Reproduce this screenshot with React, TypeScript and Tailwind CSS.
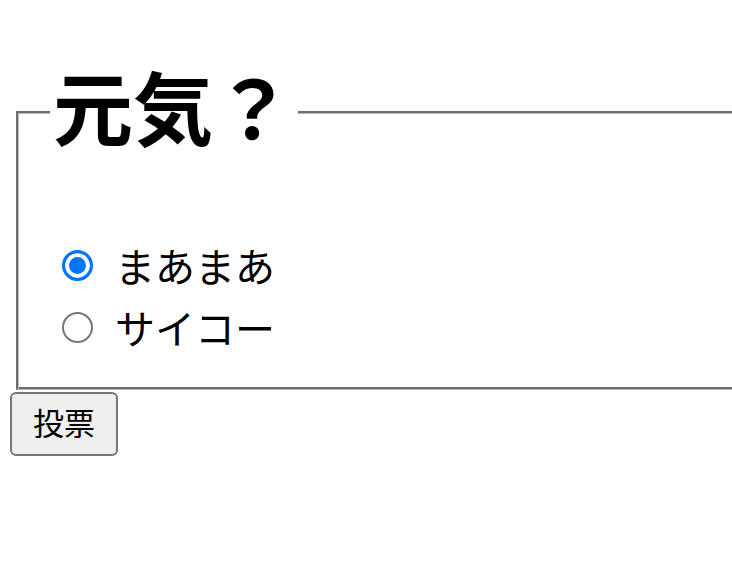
import React from 'react';

const options = [
  { id: 'maa', label: 'まあまあ', checked: true },
  { id: 'saiko', label: 'サイコー', checked: false },
];

const App: React.FC = () => {
  return (
    <div className="w-screen h-screen overflow-hidden bg-white text-black font-['Noto_Sans_CJK_JP',sans-serif]">
      <form className="pt-[46px] pl-[10px]" onSubmit={e => e.preventDefault()}>
        {/* groove border: dark outside top/left, dark inside bottom/right */}
        <fieldset className="ml-[6px] w-[780px] min-w-0 border-t-2 border-l-2 border-b border-r border-solid border-t-[#6e6e6e] border-l-[#6e6e6e] border-b-[#b8b8b8] border-r-[#b8b8b8] shadow-[inset_1px_1px_0_#b8b8b8,inset_-2px_-2px_0_#6e6e6e] pl-[32px] pr-[32px] pt-[56px] pb-[31px]">
          <legend className="bg-white pl-[3px] pr-[5px] pb-[16px] text-[80px] font-bold leading-[116px]">元気？</legend>
          {options.map(opt => (
            <label key={opt.id} className="flex items-center h-[62px]">
              <input
                type="radio"
                name="genki"
                defaultChecked={opt.checked}
                className="appearance-none ml-[12px] w-[31px] h-[31px] m-0 rounded-full border-2 border-[#767676] bg-white checked:border-[3px] checked:border-[#0075ff] checked:bg-[#0075ff] checked:shadow-[inset_0_0_0_4px_white]"
              />
              <span className="ml-[22px] text-[40px] leading-[62px]">{opt.label}</span>
            </label>
          ))}
        </fieldset>
        <button
          type="submit"
          className="mt-[2px] w-[108px] h-[64px] pb-[6px] border-2 border-[#767676] rounded-[6px] bg-[#efefef] text-[31px] leading-none"
        >
          投票
        </button>
      </form>
    </div>
  );
};

export default App;
